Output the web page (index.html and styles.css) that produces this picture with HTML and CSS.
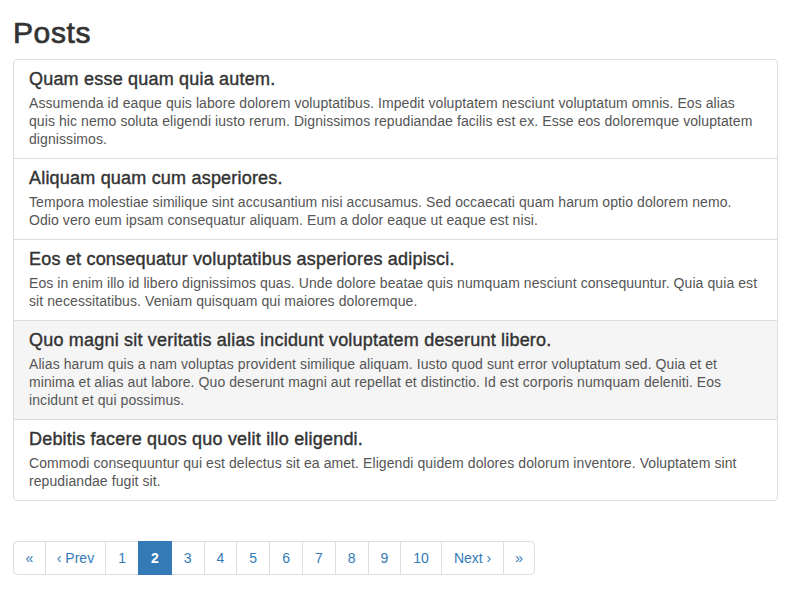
FILE: index.html
```html
<!DOCTYPE html>
<html>
<head>
<meta charset="utf-8">
<link rel="stylesheet" href="styles.css">
</head>
<body>
<div class="container">
  <h2 class="title">Posts</h2>
  <div class="list-group">
    <div class="list-group-item">
      <h4 class="item-heading">Quam esse quam quia autem.</h4>
      <p class="item-text">Assumenda id eaque quis labore dolorem voluptatibus. Impedit voluptatem nesciunt voluptatum omnis. Eos alias quis hic nemo soluta eligendi iusto rerum. Dignissimos repudiandae facilis est ex. Esse eos doloremque voluptatem dignissimos.</p>
    </div>
    <div class="list-group-item">
      <h4 class="item-heading">Aliquam quam cum asperiores.</h4>
      <p class="item-text">Tempora molestiae similique sint accusantium nisi accusamus. Sed occaecati quam harum optio dolorem nemo. Odio vero eum ipsam consequatur aliquam. Eum a dolor eaque ut eaque est nisi.</p>
    </div>
    <div class="list-group-item">
      <h4 class="item-heading">Eos et consequatur voluptatibus asperiores adipisci.</h4>
      <p class="item-text">Eos in enim illo id libero dignissimos quas. Unde dolore beatae quis numquam nesciunt consequuntur. Quia quia est sit necessitatibus. Veniam quisquam qui maiores doloremque.</p>
    </div>
    <div class="list-group-item hover">
      <h4 class="item-heading">Quo magni sit veritatis alias incidunt voluptatem deserunt libero.</h4>
      <p class="item-text">Alias harum quis a nam voluptas provident similique aliquam. Iusto quod sunt error voluptatum sed. Quia et et minima et alias aut labore. Quo deserunt magni aut repellat et distinctio. Id est corporis numquam deleniti. Eos incidunt et qui possimus.</p>
    </div>
    <div class="list-group-item">
      <h4 class="item-heading">Debitis facere quos quo velit illo eligendi.</h4>
      <p class="item-text">Commodi consequuntur qui est delectus sit ea amet. Eligendi quidem dolores dolorum inventore. Voluptatem sint repudiandae fugit sit.</p>
    </div>
  </div>
  <ul class="pagination">
    <li class="narrow"><a href="#">&laquo;</a></li>
    <li class="prev"><a href="#">&lsaquo; Prev</a></li>
    <li><a href="#">1</a></li>
    <li class="active"><a href="#">2</a></li>
    <li><a href="#">3</a></li>
    <li><a href="#">4</a></li>
    <li><a href="#">5</a></li>
    <li><a href="#">6</a></li>
    <li><a href="#">7</a></li>
    <li><a href="#">8</a></li>
    <li><a href="#">9</a></li>
    <li><a href="#">10</a></li>
    <li><a href="#">Next &rsaquo;</a></li>
    <li class="last"><a href="#">&raquo;</a></li>
  </ul>
</div>
</body>
</html>
```
FILE: styles.css
```css
* { box-sizing: border-box; }
html, body {
  margin: 0;
  padding: 0;
  background: #fff;
}
body {
  font-family: "Liberation Sans", Helvetica, Arial, sans-serif;
  font-size: 14px;
  line-height: 1.42857;
  color: #333;
}
.container {
  padding: 0 13px;
}
.title {
  font-size: 30px;
  font-weight: 400;
  line-height: 33px;
  margin: 16px 0 10px;
  color: #333;
  letter-spacing: 0.6px;
  -webkit-text-stroke: 0.7px #333;
}
.list-group {
  margin: 0 0 20px;
  display: flex;
  flex-direction: column;
}
.list-group-item {
  padding: 10px 15px;
  background: #fff;
  border: 1px solid #ddd;
  margin-bottom: -1px;
}
.list-group-item:first-child {
  border-top-left-radius: 4px;
  border-top-right-radius: 4px;
}
.list-group-item:last-child {
  margin-bottom: 0;
  border-bottom-left-radius: 4px;
  border-bottom-right-radius: 4px;
}
.list-group-item.hover {
  background: #f5f5f5;
}
.item-heading {
  font-size: 18px;
  font-weight: 400;
  line-height: 19px;
  margin: 0 0 5px;
  color: #333;
  letter-spacing: 0.2px;
  -webkit-text-stroke: 0.4px #333;
}
.item-text {
  margin: 0;
  line-height: 18px;
  color: #555;
  letter-spacing: 0.08px;
}
.pagination {
  display: inline-flex;
  list-style: none;
  padding: 0;
  margin: 20px 0;
  border-radius: 4px;
}
.pagination li a {
  display: block;
  padding: 6px 12px;
  line-height: 20px;
  color: #337ab7;
  text-decoration: none;
  background: #fff;
  border: 1px solid #ddd;
  margin-left: -1px;
}
.pagination li.narrow a {
  padding: 6px 11.5px;
}
.pagination li.prev a {
  padding: 6px 11px;
}
.pagination li.last a {
  padding: 6px 11px;
}
.pagination li:first-child a {
  margin-left: 0;
  border-top-left-radius: 4px;
  border-bottom-left-radius: 4px;
}
.pagination li:last-child a {
  border-top-right-radius: 4px;
  border-bottom-right-radius: 4px;
}
.pagination li.active a {
  background: #337ab7;
  border-color: #337ab7;
  color: #fff;
  font-weight: 700;
  position: relative;
  z-index: 1;
}
```
